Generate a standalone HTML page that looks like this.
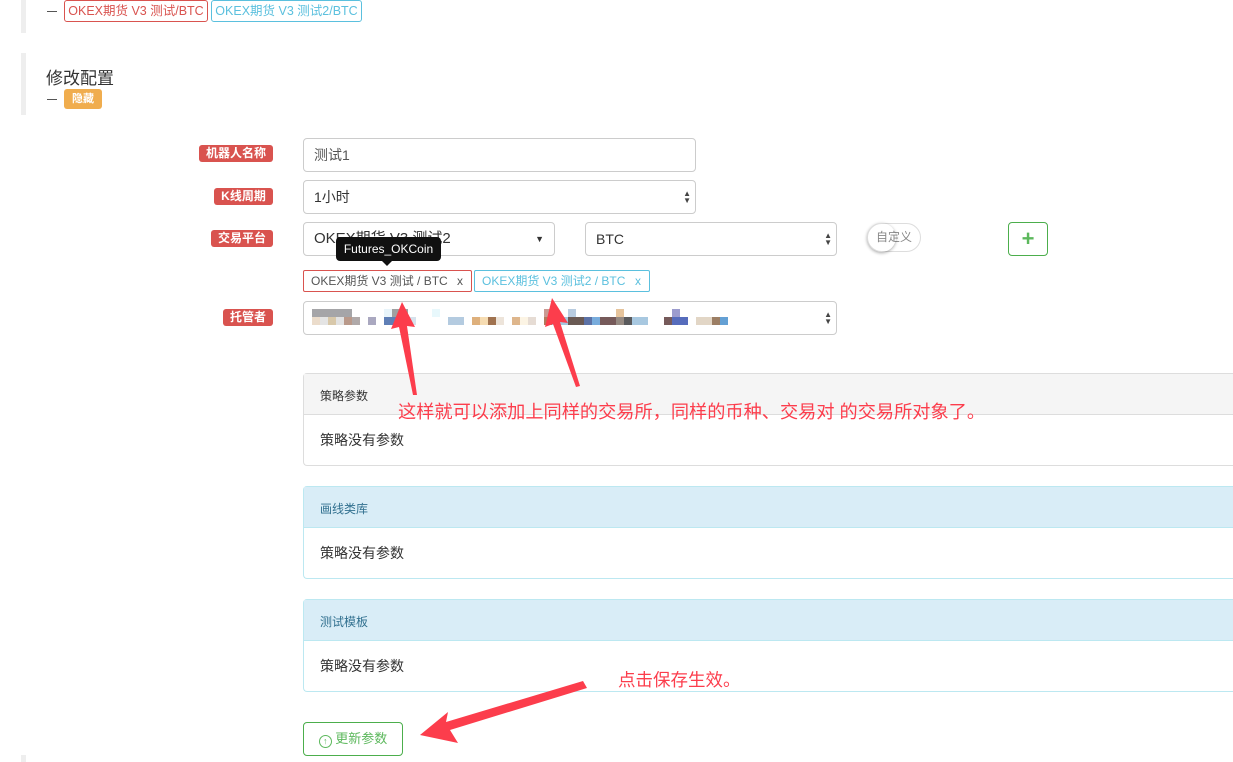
<!DOCTYPE html>
<html><head><meta charset="utf-8"><style>
body{margin:0;width:1233px;height:762px;background:#fff;position:relative;overflow:hidden;font-family:"Liberation Sans","Noto Sans CJK SC",sans-serif;color:#333}
.a{position:absolute;box-sizing:border-box}
.bar{background:#eee;left:21px;width:5px}
.lbl{background:#d9534f;color:#fff;font-size:12px;font-weight:bold;height:17px;line-height:17px;border-radius:3px;text-align:center}
.inp{border:1px solid #ccc;border-radius:4px;font-size:14px;padding-left:10px;background:#fff;color:#555}
.ud{position:absolute;right:4px;top:50%;transform:translateY(-50%);font-size:8px;line-height:7px;color:#444;text-align:center}
.pnl{border:1px solid #ddd;border-right:none;border-radius:4px 0 0 4px;left:303px;width:940px;height:93px}
.ph{height:41px;border-bottom:1px solid #ddd;font-size:12px;padding:13px 0 0 16px;box-sizing:border-box}
.pb{font-size:14px;padding:15px 0 0 16px;color:#333}
.info{border-color:#bce8f1}.info .ph{background:#d9edf7;border-color:#bce8f1;color:#31708f}
</style></head><body>
<div class="a bar" style="top:0;height:33px"></div>
<div class="a bar" style="top:53px;height:62px"></div>
<div class="a bar" style="top:755px;height:7px"></div>
<div class="a" style="left:47px;top:11px;width:10px;height:1px;background:#555"></div>
<div class="a" style="left:64px;top:0;width:144px;height:22px;border:1px solid #d9534f;border-radius:3px;color:#d9534f;font-size:12.5px;line-height:20px;text-align:center">OKEX期货 V3 测试/BTC</div>
<div class="a" style="left:211px;top:0;width:151px;height:22px;border:1px solid #5bc0de;border-radius:3px;color:#5bc0de;font-size:12.5px;line-height:20px;text-align:center">OKEX期货 V3 测试2/BTC</div>
<div class="a" style="left:46px;top:64px;font-size:17px;color:#333">修改配置</div>
<div class="a" style="left:47px;top:99px;width:10px;height:1px;background:#555"></div>
<div class="a" style="left:64px;top:89px;width:38px;height:20px;background:#f0ad4e;color:#fff;border-radius:3px;font-size:11px;font-weight:bold;line-height:20px;text-align:center">隐藏</div>

<div class="a lbl" style="left:199px;top:145px;width:74px">机器人名称</div>
<div class="a lbl" style="left:214px;top:188px;width:59px">K线周期</div>
<div class="a lbl" style="left:211px;top:230px;width:62px">交易平台</div>
<div class="a lbl" style="left:223px;top:309px;width:50px">托管者</div>

<div class="a inp" style="left:303px;top:138px;width:393px;height:34px;line-height:32px">测试1</div>
<div class="a inp" style="left:303px;top:180px;width:393px;height:34px;line-height:32px;color:#333">1小时<div class="ud">▲<br>▼</div></div>
<div class="a inp" style="left:303px;top:222px;width:252px;height:34px;line-height:32px;color:#333;font-size:15px">OKEX期货 V3 测试2<span style="position:absolute;right:10px;font-size:9px">▼</span></div>
<div class="a inp" style="left:585px;top:222px;width:252px;height:34px;line-height:32px;color:#333">BTC<div class="ud">▲<br>▼</div></div>
<div class="a" style="left:867px;top:223px;width:54px;height:29px;border:1px solid #ddd;border-radius:15px;font-size:12px;color:#888;line-height:27px;text-align:center">自定义</div>
<div class="a" style="left:867px;top:223px;width:29px;height:29px;border-radius:50%;box-shadow:0 1px 3px rgba(0,0,0,.35)"></div>
<div class="a" style="left:1008px;top:222px;width:40px;height:34px;border:1px solid #4cae4c;border-radius:4px;color:#5cb85c;font-size:22px;font-weight:bold;text-align:center;line-height:31px">+</div>

<div class="a" style="left:336px;top:237px;width:105px;height:24px;background:#111;border-radius:4px;color:#fff;font-size:12px;line-height:24px;text-align:center">Futures_OKCoin</div>
<div class="a" style="left:382px;top:261px;width:0;height:0;border:5px solid transparent;border-top-color:#111"></div>
<div class="a" style="left:303px;top:270px;width:169px;height:22px;border:1px solid #d9534f;border-radius:2px;font-size:12px;line-height:20px;padding-left:7px;color:#555">OKEX期货 V3 测试 / BTC<span style="position:absolute;right:8px">x</span></div>
<div class="a" style="left:474px;top:270px;width:176px;height:22px;border:1px solid #5bc0de;border-radius:2px;font-size:12px;line-height:20px;padding-left:7px;color:#5bc0de">OKEX期货 V3 测试2 / BTC<span style="position:absolute;right:8px">x</span></div>

<div class="a inp" style="left:303px;top:301px;width:534px;height:34px"><div class="ud">▲<br>▼</div></div>
<svg class="a" style="left:312px;top:309px" width="420" height="17">
<g>
<rect x="0" y="0" width="40" height="8" fill="#a5a5a8"/>
<rect x="0" y="8" width="8" height="8" fill="#ebdccb"/><rect x="8" y="8" width="8" height="8" fill="#e4e4e4"/><rect x="16" y="8" width="8" height="8" fill="#d8c8aa"/><rect x="24" y="8" width="8" height="8" fill="#e2e2e2"/><rect x="32" y="8" width="8" height="8" fill="#b9998a"/><rect x="40" y="8" width="8" height="8" fill="#b0a9a9"/>
<rect x="56" y="8" width="8" height="8" fill="#aaa8c0"/>
<rect x="72" y="0" width="16" height="8" fill="#e8f4fa"/><rect x="80" y="0" width="16" height="8" fill="#a0a0a0"/>
<rect x="72" y="8" width="24" height="8" fill="#5f7fb6"/><rect x="96" y="8" width="8" height="8" fill="#d6e2ec"/>
<rect x="120" y="0" width="8" height="8" fill="#e8f8fc"/>
<rect x="136" y="8" width="16" height="8" fill="#b4cbe0"/>
<rect x="160" y="8" width="8" height="8" fill="#deb07c"/><rect x="168" y="8" width="8" height="8" fill="#f6dcb2"/><rect x="176" y="8" width="8" height="8" fill="#a0724f"/><rect x="184" y="8" width="8" height="8" fill="#ede4da"/>
<rect x="200" y="8" width="8" height="8" fill="#deb68c"/><rect x="208" y="8" width="8" height="8" fill="#fcf4e4"/><rect x="216" y="8" width="8" height="8" fill="#e6dcd4"/>
<rect x="232" y="0" width="8" height="8" fill="#c99a92"/><rect x="232" y="8" width="8" height="8" fill="#b27a5c"/>
<rect x="240" y="8" width="16" height="8" fill="#a6c8e0"/><rect x="256" y="0" width="8" height="8" fill="#b8cce0"/><rect x="256" y="8" width="16" height="8" fill="#6a5a54"/><rect x="272" y="8" width="8" height="8" fill="#5c72a6"/><rect x="280" y="8" width="8" height="8" fill="#78acdc"/><rect x="288" y="8" width="16" height="8" fill="#765a5a"/><rect x="304" y="0" width="8" height="8" fill="#e6c49c"/><rect x="304" y="8" width="8" height="8" fill="#968a82"/><rect x="312" y="8" width="8" height="8" fill="#5a5a5c"/><rect x="320" y="8" width="16" height="8" fill="#a8c8e0"/>
<rect x="352" y="8" width="8" height="8" fill="#765a5a"/><rect x="360" y="0" width="8" height="8" fill="#9c9cce"/><rect x="360" y="8" width="16" height="8" fill="#566cbc"/>
<rect x="384" y="8" width="16" height="8" fill="#e2d6c6"/><rect x="400" y="8" width="8" height="8" fill="#9c7e64"/><rect x="408" y="8" width="8" height="8" fill="#64a0d4"/>
</g></svg>

<div class="a pnl" style="top:373px"><div class="ph" style="background:#f5f5f5">策略参数</div><div class="pb">策略没有参数</div></div>
<div class="a pnl info" style="top:486px"><div class="ph">画线类库</div><div class="pb">策略没有参数</div></div>
<div class="a pnl info" style="top:599px"><div class="ph">测试模板</div><div class="pb">策略没有参数</div></div>

<div class="a" style="left:303px;top:722px;width:100px;height:34px;border:1px solid #4cae4c;border-radius:4px;color:#5cb85c;font-size:13px;line-height:32px;text-align:center"><span style="display:inline-block;width:11px;height:11px;border:1.5px solid #5cb85c;border-radius:50%;font-size:9px;line-height:11px;vertical-align:-1px;font-weight:bold">↑</span> 更新参数</div>

<div class="a" style="left:398px;top:398px;font-size:18.2px;color:#fc3d4c;white-space:nowrap">这样就可以添加上同样的交易所，同样的币种、交易对 的交易所对象了。</div>
<div class="a" style="left:618px;top:667px;font-size:17.5px;color:#fc3d4c">点击保存生效。</div>

<svg class="a" style="left:0;top:0" width="1233" height="762">
<g fill="#fc3d4c">
<polygon points="402,302 391,329 399,327 413,395 417,395 407,326 415,327"/>
<polygon points="552,298 545,327 553,324 576,387 580,386 560,322 568,323"/>
<polygon points="420,735 448,712 446,722 583,681 587,688 450,730 458,743"/>
</g></svg>
</body></html>
